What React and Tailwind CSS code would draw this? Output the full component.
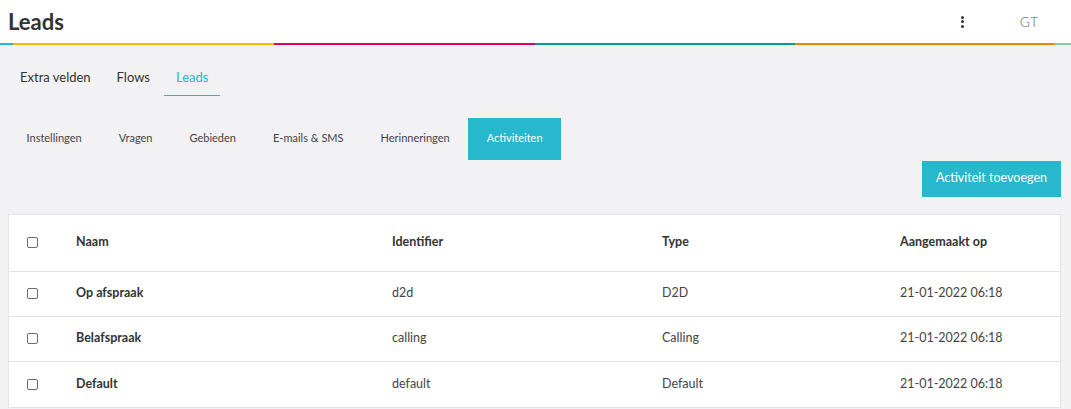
import React from "react";

const stripes = [
  { w: "w-[13px]", c: "bg-[#27b8cc]" },
  { w: "w-[261px]", c: "bg-[#fbb900]" },
  { w: "w-[261px]", c: "bg-[#e2005f]" },
  { w: "w-[260px]", c: "bg-[#00a08f]" },
  { w: "w-[260px]", c: "bg-[#f08300]" },
  { w: "flex-1", c: "bg-[#86cdaa]" },
];

const subTabs = ["Instellingen", "Vragen", "Gebieden", "E-mails & SMS", "Herinneringen"];

const rows = [
  { name: "Op afspraak", id: "d2d", type: "D2D", date: "21-01-2022 06:18" },
  { name: "Belafspraak", id: "calling", type: "Calling", date: "21-01-2022 06:18" },
  { name: "Default", id: "default", type: "Default", date: "21-01-2022 06:18" },
];

function Checkbox() {
  return <span className="block w-[11px] h-[11px] border border-[#6b6b6b] rounded-[2px] bg-white" />;
}

export default function App() {
  return (
    <div className="min-h-[409px] bg-[#f2f2f4] text-[#333] font-['Lato','Liberation_Sans',sans-serif]">
      {/* top bar */}
      <div className="bg-white h-[43px] flex items-center px-2">
        <h1 className="text-[22px] font-bold text-[#333] leading-none">Leads</h1>
        <div className="ml-auto flex items-center">
          <span className="flex flex-col gap-[1.5px] mr-[56px]">
            <span className="w-[3px] h-[3px] rounded-full bg-[#333]" />
            <span className="w-[3px] h-[3px] rounded-full bg-[#333]" />
            <span className="w-[3px] h-[3px] rounded-full bg-[#333]" />
          </span>
          <span className="text-[14px] font-light text-[#666] mr-[25px]">GT</span>
        </div>
      </div>
      <div className="flex h-[2px]">
        {stripes.map((s, i) => (
          <div key={i} className={`${s.w} ${s.c}`} />
        ))}
      </div>

      {/* main tabs */}
      <div className="flex gap-[2px] px-2 mt-[23px]">
        <div className="px-3 pb-[8px] text-[13px] text-[#333]">Extra velden</div>
        <div className="px-3 pb-[8px] text-[13px] text-[#333]">Flows</div>
        <div className="px-3 pb-[7px] text-[13px] text-[#29b6cb] border-b-[1.5px] border-[#29b6cb]">Leads</div>
      </div>

      {/* sub tabs */}
      <div className="flex px-2 mt-[22px]">
        {subTabs.map((t) => (
          <div key={t} className="h-[42px] px-[18.5px] flex items-center text-[11px] text-[#444]">
            {t}
          </div>
        ))}
        <div className="h-[42px] px-[18.5px] flex items-center text-[11px] text-white bg-[#27b8cd]">
          Activiteiten
        </div>
      </div>

      <div className="flex justify-end pr-[10px] mt-[1px]">
        <button className="h-[36px] px-[14px] bg-[#27b8cd] text-white text-[12.5px]">
          Activiteit toevoegen
        </button>
      </div>

      {/* table */}
      <div className="mx-2 mr-[10px] mt-[17px] bg-white border border-[#e4e4e6] text-[12.5px]">
        <div className="grid grid-cols-[67px_316px_270px_238px_1fr] items-center h-[57px] border-b border-[#e4e4e6] font-bold text-[#333]">
          <div className="pl-[18px]"><Checkbox /></div>
          <div>Naam</div>
          <div>Identifier</div>
          <div>Type</div>
          <div>Aangemaakt op</div>
        </div>
        {rows.map((r, i) => (
          <div
            key={r.id}
            className={`grid grid-cols-[67px_316px_270px_238px_1fr] items-center h-[45px] text-[#444] ${
              i < rows.length - 1 ? "border-b border-[#e4e4e6]" : ""
            }`}
          >
            <div className="pl-[18px]"><Checkbox /></div>
            <div className="font-bold text-[#333]">{r.name}</div>
            <div>{r.id}</div>
            <div>{r.type}</div>
            <div>{r.date}</div>
          </div>
        ))}
      </div>
    </div>
  );
}
